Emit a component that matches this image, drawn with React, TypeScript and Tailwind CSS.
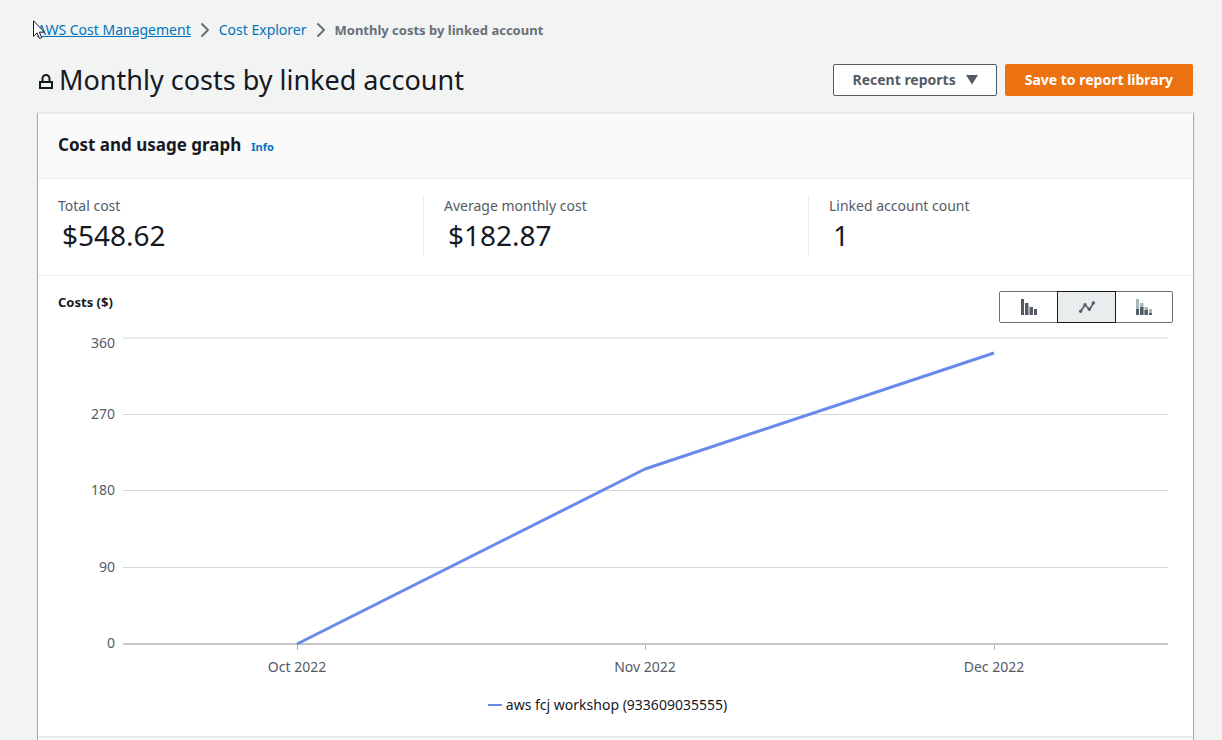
import { useState } from 'react';

type ChartKind = 'bar' | 'line' | 'stack';

const STATS = [
  { label: 'Total cost', value: '$548.62' },
  { label: 'Average monthly cost', value: '$182.87' },
  { label: 'Linked account count', value: '1' },
];

const POINTS = [
  { month: 'Oct 2022', x: 239, y: 320 },
  { month: 'Nov 2022', x: 587, y: 145 },
  { month: 'Dec 2022', x: 936, y: 29 },
];

const GRID = [
  { label: '360', y: 14, textY: 24 },
  { label: '270', y: 90, textY: 95 },
  { label: '180', y: 166, textY: 171 },
  { label: '90', y: 243, textY: 248 },
  { label: '0', y: 320, textY: 324 },
];

const KINDS: { kind: ChartKind; label: string }[] = [
  { kind: 'bar', label: 'Bar' },
  { kind: 'line', label: 'Line' },
  { kind: 'stack', label: 'Stack' },
];

function Chevron() {
  return (
    <svg width="10" height="16" viewBox="0 0 10 16" fill="none" stroke="#687078" strokeWidth="2" aria-hidden="true">
      <path d="M1.5 1.5 8 8l-6.5 6.5" />
    </svg>
  );
}

function KindIcon({ kind }: { kind: ChartKind }) {
  if (kind === 'line') {
    return (
      <svg width="16" height="12" viewBox="0 0 16 12" fill="#545b64" aria-hidden="true">
        <path d="M1.5 10.5 6 4l4.5 4.5L14.5 2" fill="none" stroke="#545b64" strokeWidth="1.6" />
        <circle cx="1.7" cy="10.3" r="1.7" />
        <circle cx="6" cy="3.8" r="1.7" />
        <circle cx="10.3" cy="8.3" r="1.7" />
        <circle cx="14.3" cy="1.9" r="1.7" />
      </svg>
    );
  }
  return (
    <svg width="16" height="16" viewBox="0 0 16 16" fill={kind === 'bar' ? '#545b64' : '#aab7b8'} aria-hidden="true">
      <path d="M0 0h3v16H0zM4 4h3.5v12H4zM8.5 8H12v8H8.5zM13 10h3v6h-3z" />
      {kind === 'stack' && <path fill="#545b64" d="M0 10h3v6H0zM4 8h3.5v8H4zM8.5 11H12v5H8.5zM13 14h3v2h-3z" />}
    </svg>
  );
}

function CostChart() {
  return (
    <svg viewBox="0 -1 1115 355" className="block h-auto w-full" role="img" aria-label="Costs ($)">
      {GRID.map((g, i) => (
        <g key={g.label}>
          {i === 0 || i === GRID.length - 1 ? (
            <rect x="65" y={g.y - 1} width="1045" height="2" fill={i === 0 ? '#eaeded' : '#c6c6c6'} />
          ) : (
            <rect x="65" y={g.y} width="1045" height="1" fill="#d5dbdb" />
          )}
          <text x="57" y={g.textY} textAnchor="end" className="fill-[#545b64] text-[14px]">{g.label}</text>
        </g>
      ))}
      {POINTS.map((p) => (
        <g key={p.month}>
          <rect x={p.x} y="321" width="1" height="5" fill="#aab7b8" />
          <text x={p.x} y="348" textAnchor="middle" className="fill-[#545b64] text-[14px]">{p.month}</text>
        </g>
      ))}
      <polyline points={POINTS.map((p) => `${p.x},${p.y}`).join(' ')} fill="none" stroke="#688ae8" strokeWidth="3" strokeLinejoin="round" />
    </svg>
  );
}

export default function App() {
  const [kind, setKind] = useState<ChartKind>('line');

  return (
    <div className="relative min-h-screen bg-[#f2f3f3] pr-7 pl-[37px] font-['Noto_Sans',sans-serif] text-[#16191f]">
      <nav aria-label="Breadcrumb" className="flex items-center gap-[9px] pt-5 text-sm leading-5">
        <a href="#" className="text-[#0073bb] underline">AWS Cost Management</a>
        <Chevron />
        <a href="#" className="text-[#0073bb]">Cost Explorer</a>
        <Chevron />
        <span className="text-[13px] font-bold text-[#687078]">Monthly costs by linked account</span>
      </nav>

      <header className="flex items-center justify-between pt-[22px] pr-px pb-3.5">
        <h1 className="flex items-center gap-1.5 text-[27px] leading-9">
          <svg width="16" height="16" viewBox="0 0 16 16" fill="none" stroke="#16191f" strokeWidth="2" className="mt-1" aria-hidden="true">
            <path d="M3 8h12v6H3zM5.5 8V4.500a3.500 3.500 0 0 1 7 0V8" />
          </svg>
          Monthly costs by linked account
        </h1>
        <div className="flex gap-2 text-sm font-bold">
          <button type="button" className="flex h-8 items-center gap-2.5 rounded-xs border border-[#545b64] bg-white px-[18px] text-[#545b64]">
            Recent reports
            <svg width="12" height="10" viewBox="0 0 12 10" fill="#545b64" aria-hidden="true"><path d="M0 0h12L6 9.5z" /></svg>
          </button>
          <button type="button" className="h-8 rounded-xs bg-[#ec7211] px-5 text-white">Save to report library</button>
        </div>
      </header>

      <main className="border-x border-t-2 border-x-[#a5adae] border-t-[#eaeded] bg-white shadow-[0_1px_1px_0_rgba(0,28,36,0.15)]">
        <div className="flex items-baseline gap-2.5 border-b border-[#eaeded] bg-[#fafafa] px-5 pt-[17px] pb-[19px]">
          <h2 className="text-[17px] leading-7 font-bold">Cost and usage graph</h2>
          <a href="#" className="text-[11px] font-bold text-[#0073bb]">Info</a>
        </div>

        <dl className="grid grid-cols-3 border-b border-[#eaeded] pt-4 pb-5">
          {STATS.map((s, i) => (
            <div key={s.label} className={`h-[60px] pl-5 ${i > 0 ? 'border-l border-[#eaeded]' : ''}`}>
              <dt className="text-sm leading-[22px] text-[#545b64]">{s.label}</dt>
              <dd className="pl-1 text-[28px] leading-9">{s.value}</dd>
            </div>
          ))}
        </dl>

        <section className="px-5 pt-[15px] pb-5">
          <div className="flex items-start justify-between">
            <h3 className="text-[13px] leading-[22px] font-bold">Costs ($)</h3>
            <div className="flex" role="group" aria-label="Chart type">
              {KINDS.map((k) => (
                <button
                  key={k.kind}
                  type="button"
                  aria-label={k.label}
                  aria-pressed={kind === k.kind}
                  onClick={() => setKind(k.kind)}
                  className={`-ml-px grid h-8 w-[59px] place-items-center border first:rounded-l-xs last:w-[58px] last:rounded-r-xs ${kind === k.kind ? 'z-10 border-[#16191f] bg-[#eaeded]' : 'border-[#687078] bg-white'}`}
                >
                  <KindIcon kind={k.kind} />
                </button>
              ))}
            </div>
          </div>
          <CostChart />
          <div className="mt-4 flex items-center justify-center gap-1 pr-4 text-sm leading-[22px]">
            <span className="h-0.5 w-3.5 bg-[#688ae8]" />
            aws fcj workshop (933609035555)
          </div>
        </section>
        <div className="h-1 border-t-2 border-[#eaeded] bg-[#fafafa]" />
      </main>

      {/* mouse pointer */}
      <svg width="13" height="20" viewBox="0 0 13 20" className="absolute top-5 left-[33px]" fill="#fff" stroke="#16191f" aria-hidden="true">
        <path d="M.5.8v15.5l3.6-3.4 2.5 5.6 2.2-1-2.5-5.4h5z" />
      </svg>
    </div>
  );
}
